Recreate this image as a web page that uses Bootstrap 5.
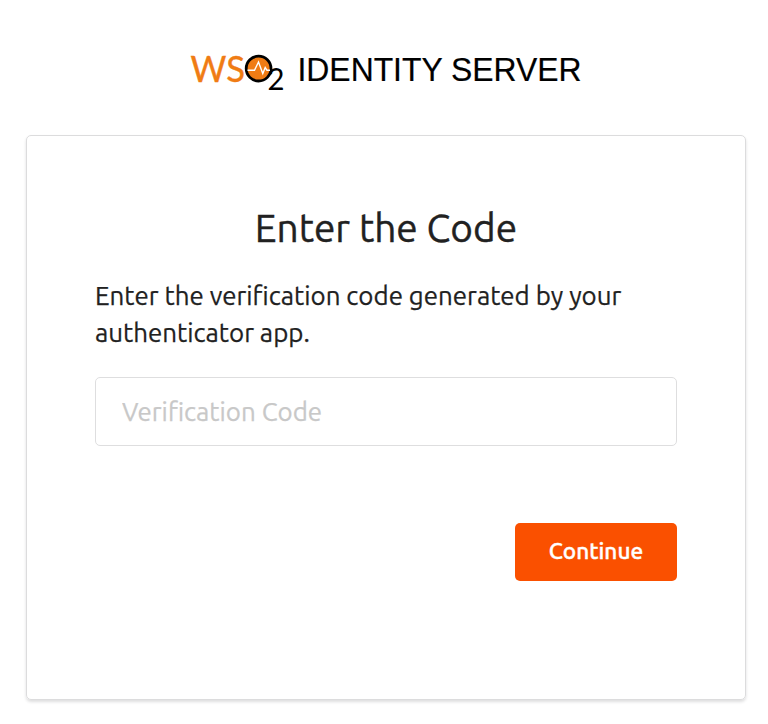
<!DOCTYPE html>
<html lang="en">
<head>
<meta charset="utf-8">
<meta name="viewport" content="width=device-width, initial-scale=1">
<title>Enter the Code</title>
<link href="https://cdn.jsdelivr.net/npm/bootstrap@5.3.0/dist/css/bootstrap.min.css" rel="stylesheet">
<style>
body { font-family: Ubuntu, "Noto Sans", sans-serif; color: #212121; background: #fff; }
.page { width: 720px; margin-left: 26px; }
.brand { height: 135px; padding-top: 45px; }
.brand svg { display: block; margin-left: 154px; }
.panel { height: 565px; padding: 66px 68px 0; border: 1px solid #dcdcdd; border-radius: 5px; box-shadow: 0 2px 3px rgba(34,36,38,.15); }
.title { font-size: 38.8px; line-height: 52px; font-weight: 400; margin-bottom: 23px; -webkit-text-stroke: .4px; }
.intro { font-size: 25.9px; line-height: 37px; margin-bottom: 26px; white-space: nowrap; -webkit-text-stroke: .25px; }
.code { height: 69px; padding: 0 26px; font-size: 25.9px; border-color: #dededf; border-radius: 5px; color: #212121; -webkit-text-stroke: .25px; }
.code::placeholder { color: #c8c8c8; opacity: 1; }
.go { width: 162px; height: 58px; margin-top: 77px; padding: 0 0 3px; background: #fa5000; border: 0; border-radius: 5px; color: #fff; font-size: 22.6px; font-weight: 500; -webkit-text-stroke: .4px; }
.go:hover { background: #e04800; color: #fff; }
</style>
<script src="https://cdn.jsdelivr.net/npm/bootstrap@5.3.0/dist/js/bootstrap.bundle.min.js"></script>
</head>
<body class="min-vh-100">
<main class="page">
  <header class="brand">
    <svg width="420" height="60" viewBox="180 45 420 60" role="img" aria-label="WSO2 Identity Server">
      <g font-family="Lato, sans-serif" font-size="37.5">
        <text x="190.5" y="81.8" fill="#f07c14" stroke="#f07c14" stroke-width=".4" textLength="54.5" lengthAdjust="spacingAndGlyphs">WS</text>
        <text x="267.5" y="90" font-size="30.5" fill="#000" textLength="17" lengthAdjust="spacingAndGlyphs">2</text>
      </g>
      <circle cx="258.6" cy="68.6" r="12.4" fill="#f07c14" stroke="#000" stroke-width="2.8"/>
      <path d="M247.5 70.3H254.5L258.5 62L262.8 73.5L265.2 67.5L267 70.3H270" fill="none" stroke="#fff" stroke-width="1.4"/>
      <text x="297.5" y="81.2" font-family="Liberation Sans, Arial, sans-serif" font-size="32.5" textLength="284" lengthAdjust="spacingAndGlyphs" stroke="#000" stroke-width=".2">IDENTITY SERVER</text>
    </svg>
  </header>
  <section class="panel">
    <h1 class="title text-center">Enter the Code</h1>
    <p class="intro">Enter the verification code generated by your<br>authenticator app.</p>
    <form>
      <input class="form-control code" type="text" placeholder="Verification Code" aria-label="Verification Code">
      <div class="d-flex justify-content-end">
        <button class="btn go" type="button">Continue</button>
      </div>
    </form>
  </section>
</main>
</body>
</html>
